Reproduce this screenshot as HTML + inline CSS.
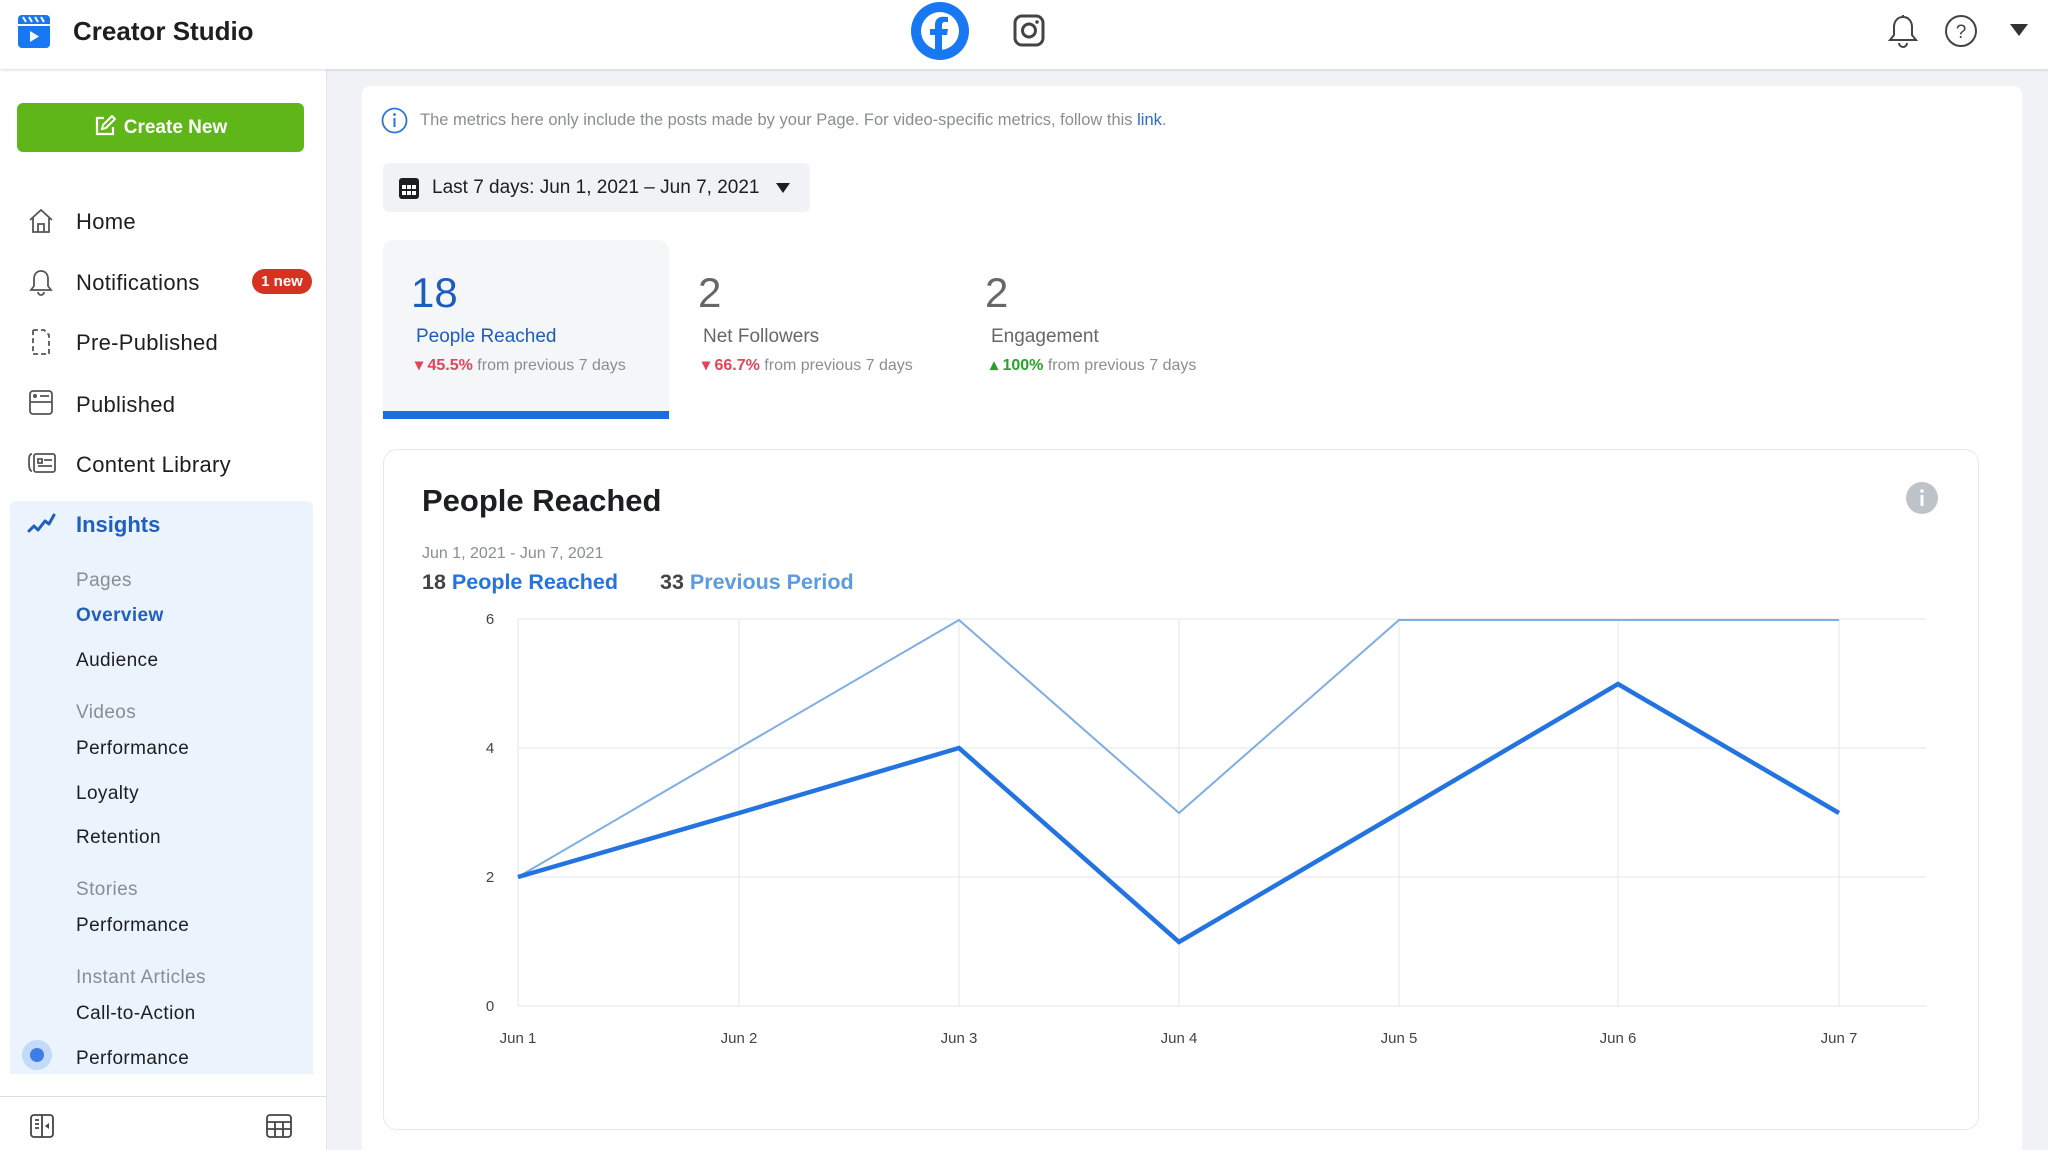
<!DOCTYPE html>
<html style="width:2048px;height:1150px;overflow:hidden"><head><meta charset="utf-8"><style>
*{margin:0;padding:0;box-sizing:border-box}
body{width:2048px;height:1150px;overflow:hidden;background:#f0f2f5;font-family:"Liberation Sans",sans-serif;position:relative;color:#1c1e21}
.a{position:absolute;white-space:nowrap}
.hdr{position:absolute;left:0;top:0;width:2048px;height:69px;background:#fff;box-shadow:0 1px 3px rgba(0,0,0,.15);z-index:2}
.side{position:absolute;left:0;top:69px;width:327px;height:1081px;background:#fff;border-right:1px solid #e4e6eb}
.nav{font-size:22px;color:#1c1e21;letter-spacing:.3px}
.sub{font-size:19px;color:#1c1e21;letter-spacing:.4px}
.grp{font-size:19px;color:#8a8d91;letter-spacing:.4px}
.card{position:absolute;left:362px;top:86px;width:1660px;height:1064px;background:#fff;border-radius:8px 8px 0 0}
</style></head><body>
<div class="hdr">
<svg class="a" style="left:18px;top:15px" width="32" height="33" viewBox="0 0 32 33"><rect x="0" y="0" width="32" height="33" rx="4" fill="#1877f2"/><rect x="0" y="9" width="32" height="2" fill="#fff"/><path d="M5 2l3 5M11 2l3 5M17 2l3 5M23 2l3 5" stroke="#fff" stroke-width="2"/><path d="M12 16v11l9-5.5z" fill="#fff"/></svg>
<div class="a" style="left:73px;top:16px;font-size:26px;font-weight:bold;color:#1c1e21">Creator Studio</div>
<svg class="a" style="left:911px;top:2px" width="58" height="58" viewBox="0 0 58 58"><circle cx="29" cy="29" r="29" fill="#1877f2"/><circle cx="29" cy="29" r="19" fill="#fff"/><path d="M31 48V33h5l1-6h-6v-4c0-2 1-3 3-3h3v-5c-1 0-3-.3-5-.3-5 0-8 3-8 8v4.3h-5v6h5v15z" fill="#1877f2"/></svg>
<svg class="a" style="left:1013px;top:14px" width="32" height="33" viewBox="0 0 32 33"><rect x="2" y="2" width="28" height="29" rx="7" fill="none" stroke="#444" stroke-width="3"/><circle cx="16" cy="16.5" r="6.5" fill="none" stroke="#444" stroke-width="3"/><circle cx="24" cy="8" r="1.8" fill="#444"/></svg>
<svg class="a" style="left:1888px;top:14px" width="30" height="34" viewBox="0 0 30 34"><path d="M15 3c-6 0-9 5-9 10v8l-4 5h26l-4-5v-8c0-5-3-10-9-10z" fill="none" stroke="#444" stroke-width="2"/><path d="M11 29a4 4 0 0 0 8 0" fill="none" stroke="#444" stroke-width="2"/><path d="M15 1v2" stroke="#444" stroke-width="2"/></svg>
<svg class="a" style="left:1944px;top:14px" width="34" height="34" viewBox="0 0 34 34"><circle cx="17" cy="17" r="15" fill="none" stroke="#444" stroke-width="2"/><text x="17" y="24" font-size="19" text-anchor="middle" fill="#444" font-family="Liberation Sans">?</text></svg>
<svg class="a" style="left:2010px;top:24px" width="18" height="12" viewBox="0 0 18 12"><path d="M0 0h18L9 12z" fill="#333"/></svg>
</div>

<div class="side">
<div class="a" style="left:17px;top:34px;width:287px;height:49px;background:#5eb618;border-radius:6px;color:#fff;font-size:19px;font-weight:bold;text-align:center;line-height:49px">
<svg style="vertical-align:-4px;margin-right:8px" width="22" height="22" viewBox="0 0 22 22"><path d="M10 3H3v16h16v-7" fill="none" stroke="#fff" stroke-width="2.2"/><path d="M8 14l1-4 9-9 3 3-9 9z" fill="none" stroke="#fff" stroke-width="2"/></svg>Create New</div>

<svg class="a" style="left:28px;top:139px" width="26" height="26" viewBox="0 0 26 26"><path d="M2 12L13 2l11 10M5 9v15h16V9M10 24v-8h6v8" fill="none" stroke="#555" stroke-width="1.8"/></svg>
<div class="a nav" style="left:76px;top:140px">Home</div>
<svg class="a" style="left:29px;top:199px" width="24" height="28" viewBox="0 0 24 28"><path d="M12 3c-5 0-7 4-7 8v7l-3 4h20l-3-4v-7c0-4-2-8-7-8zM9 24a3 3 0 0 0 6 0" fill="none" stroke="#555" stroke-width="1.8"/></svg>
<div class="a nav" style="left:76px;top:201px">Notifications</div>
<div class="a" style="left:252px;top:200px;width:60px;height:25px;background:#d7321f;border-radius:13px;color:#fff;font-size:15px;font-weight:bold;text-align:center;line-height:25px">1 new</div>
<svg class="a" style="left:29px;top:259px" width="24" height="28" viewBox="0 0 24 28"><path d="M4 2h11l5 5v19H4z" fill="none" stroke="#555" stroke-width="1.8" stroke-dasharray="5 3"/></svg>
<div class="a nav" style="left:76px;top:261px">Pre-Published</div>
<svg class="a" style="left:28px;top:320px" width="26" height="27" viewBox="0 0 26 27"><rect x="2" y="2" width="22" height="23" rx="3" fill="none" stroke="#555" stroke-width="1.8"/><path d="M2 13h22M12 7h9" stroke="#555" stroke-width="1.8"/><circle cx="7" cy="7" r="2" fill="#555"/></svg>
<div class="a nav" style="left:76px;top:323px">Published</div>
<svg class="a" style="left:27px;top:381px" width="30" height="26" viewBox="0 0 30 26"><path d="M5 4C2 4 2 8 2 12s0 9 3 9" fill="none" stroke="#555" stroke-width="1.8"/><rect x="7" y="4" width="21" height="18" rx="2" fill="none" stroke="#555" stroke-width="1.8"/><path d="M11 9h4v4h-4zM17 10h8M11 16h14" stroke="#555" stroke-width="1.8" fill="none"/></svg>
<div class="a nav" style="left:76px;top:383px">Content Library</div>

<div class="a" style="left:10px;top:432px;width:303px;height:573px;background:#ebf3fd;border-radius:6px 6px 0 0"></div>
<svg class="a" style="left:27px;top:442px" width="30" height="24" viewBox="0 0 30 24"><path d="M2 20l5-5 4 4 7-9 4 3 5-9" fill="none" stroke="#1f5fbf" stroke-width="3" stroke-linecap="round" stroke-linejoin="round"/></svg>
<div class="a" style="left:76px;top:443px;font-size:22px;font-weight:bold;color:#1f5fbf">Insights</div>
<div class="a grp" style="left:76px;top:501px">Pages</div>
<div class="a sub" style="left:76px;top:536px;font-weight:bold;color:#1f5fbf">Overview</div>
<div class="a sub" style="left:76px;top:581px">Audience</div>
<div class="a grp" style="left:76px;top:633px">Videos</div>
<div class="a sub" style="left:76px;top:669px">Performance</div>
<div class="a sub" style="left:76px;top:714px">Loyalty</div>
<div class="a sub" style="left:76px;top:758px">Retention</div>
<div class="a grp" style="left:76px;top:810px">Stories</div>
<div class="a sub" style="left:76px;top:846px">Performance</div>
<div class="a grp" style="left:76px;top:898px">Instant Articles</div>
<div class="a sub" style="left:76px;top:934px">Call-to-Action</div>
<div class="a" style="left:22px;top:971px;width:30px;height:30px;border-radius:50%;background:#c3dafb"></div>
<div class="a" style="left:30px;top:979px;width:14px;height:14px;border-radius:50%;background:#3d7de5"></div>
<div class="a sub" style="left:76px;top:979px">Performance</div>
<div class="a" style="left:0;top:1027px;width:327px;height:1px;background:#dadde1"></div>
<svg class="a" style="left:29px;top:1044px" width="26" height="26" viewBox="0 0 26 26"><rect x="2" y="2" width="22" height="22" rx="3" fill="none" stroke="#444" stroke-width="1.8"/><path d="M13 2v22M6 7h4M6 11h4M6 15h4" stroke="#444" stroke-width="1.8"/><path d="M20 10l-4 3 4 3z" fill="#444"/></svg>
<svg class="a" style="left:265px;top:1044px" width="28" height="26" viewBox="0 0 28 26"><rect x="2" y="2" width="24" height="22" rx="3" fill="none" stroke="#444" stroke-width="1.8"/><path d="M2 9h24M2 16h24M10 9v15M18 9v15" stroke="#444" stroke-width="1.8"/></svg>
</div>

<div class="card"></div>
<svg class="a" style="left:381px;top:107px" width="27" height="27" viewBox="0 0 27 27"><circle cx="13.5" cy="13.5" r="12" fill="none" stroke="#2d77d4" stroke-width="1.8"/><path d="M13.5 11v9" stroke="#2d77d4" stroke-width="2"/><circle cx="13.5" cy="7.5" r="1.4" fill="#2d77d4"/></svg>
<div class="a" style="left:420px;top:111px;font-size:16.5px;color:#8a8d91">The metrics here only include the posts made by your Page. For video-specific metrics, follow this <span style="color:#2d6cc4">link</span>.</div>

<div class="a" style="left:383px;top:163px;width:427px;height:49px;background:#f0f2f5;border-radius:6px"></div>
<svg class="a" style="left:398px;top:176px" width="22" height="24" viewBox="0 0 22 24"><rect x="1" y="2" width="20" height="21" rx="3" fill="#1c1e21"/><rect x="4" y="9" width="4" height="4" fill="#fff"/><rect x="9" y="9" width="4" height="4" fill="#fff"/><rect x="14" y="9" width="4" height="4" fill="#fff"/><rect x="4" y="15" width="4" height="4" fill="#fff"/><rect x="9" y="15" width="4" height="4" fill="#fff"/><rect x="14" y="15" width="4" height="4" fill="#fff"/></svg>
<div class="a" style="left:432px;top:177px;font-size:19px;color:#1c1e21">Last 7 days: Jun 1, 2021 – Jun 7, 2021</div>
<svg class="a" style="left:776px;top:183px" width="14" height="10" viewBox="0 0 14 10"><path d="M0 0h14L7 10z" fill="#1c1e21"/></svg>

<div class="a" style="left:383px;top:240px;width:286px;height:178px;background:#f5f6f7;border-radius:10px 10px 0 0"></div>
<div class="a" style="left:383px;top:411px;width:286px;height:8px;background:#1a6fe0"></div>
<div class="a" style="left:411px;top:269px;font-size:42px;color:#1d5cbf">18</div>
<div class="a" style="left:416px;top:326px;font-size:19px;color:#1d5cbf">People Reached</div>
<div class="a" style="left:415px;top:355px;font-size:16px;color:#8a8d91"><span style="color:#e0455a;font-weight:bold">▾ 45.5%</span> from previous 7 days</div>
<div class="a" style="left:698px;top:269px;font-size:42px;color:#65676b">2</div>
<div class="a" style="left:703px;top:326px;font-size:19px;color:#65676b">Net Followers</div>
<div class="a" style="left:702px;top:355px;font-size:16px;color:#8a8d91"><span style="color:#e0455a;font-weight:bold">▾ 66.7%</span> from previous 7 days</div>
<div class="a" style="left:985px;top:269px;font-size:42px;color:#65676b">2</div>
<div class="a" style="left:991px;top:326px;font-size:19px;color:#65676b">Engagement</div>
<div class="a" style="left:990px;top:355px;font-size:16px;color:#8a8d91"><span style="color:#2aa12a;font-weight:bold">▴ 100%</span> from previous 7 days</div>

<div class="a" style="left:383px;top:449px;width:1596px;height:681px;border:1px solid #e6e8eb;border-radius:14px;background:#fff"></div>
<div class="a" style="left:422px;top:483px;font-size:31px;font-weight:bold;color:#1c1e21">People Reached</div>
<svg class="a" style="left:1906px;top:482px" width="32" height="32" viewBox="0 0 32 32"><circle cx="16" cy="16" r="16" fill="#bec3c9"/><rect x="14.5" y="13" width="3" height="11" fill="#fff"/><circle cx="16" cy="9" r="1.8" fill="#fff"/></svg>
<div class="a" style="left:422px;top:545px;font-size:16px;color:#8a8d91">Jun 1, 2021 - Jun 7, 2021</div>
<div class="a" style="left:422px;top:570px;font-size:21.5px;font-weight:bold;color:#444">18 <span style="color:#2374e1">People Reached</span></div>
<div class="a" style="left:660px;top:570px;font-size:21.5px;font-weight:bold;color:#444">33 <span style="color:#5b9be0">Previous Period</span></div>

<svg class="a" style="left:0;top:0" width="2048" height="1150">
<g stroke="#eceef1" stroke-width="1.5">
<line x1="518" y1="619" x2="1926" y2="619"/><line x1="518" y1="748" x2="1926" y2="748"/><line x1="518" y1="877" x2="1926" y2="877"/><line x1="518" y1="1006" x2="1926" y2="1006"/>
<line x1="518" y1="619" x2="518" y2="1006"/><line x1="739" y1="619" x2="739" y2="1006"/><line x1="959" y1="619" x2="959" y2="1006"/><line x1="1179" y1="619" x2="1179" y2="1006"/><line x1="1399" y1="619" x2="1399" y2="1006"/><line x1="1618" y1="619" x2="1618" y2="1006"/><line x1="1839" y1="619" x2="1839" y2="1006"/>
</g>
<g font-family="Liberation Sans" font-size="15" fill="#444">
<text x="490" y="624" text-anchor="middle">6</text><text x="490" y="753" text-anchor="middle">4</text><text x="490" y="882" text-anchor="middle">2</text><text x="490" y="1011" text-anchor="middle">0</text>
<text x="518" y="1043" text-anchor="middle">Jun 1</text><text x="739" y="1043" text-anchor="middle">Jun 2</text><text x="959" y="1043" text-anchor="middle">Jun 3</text><text x="1179" y="1043" text-anchor="middle">Jun 4</text><text x="1399" y="1043" text-anchor="middle">Jun 5</text><text x="1618" y="1043" text-anchor="middle">Jun 6</text><text x="1839" y="1043" text-anchor="middle">Jun 7</text>
</g>
<polyline points="518,877 739,748 959,620 1179,813 1399,620 1618,620 1839,620" fill="none" stroke="#7eaee3" stroke-width="2"/>
<polyline points="518,877 739,813 959,748 1179,942 1399,813 1618,684 1839,813" fill="none" stroke="#2374e1" stroke-width="4.5" stroke-linejoin="miter"/>
</svg>
</body></html>
